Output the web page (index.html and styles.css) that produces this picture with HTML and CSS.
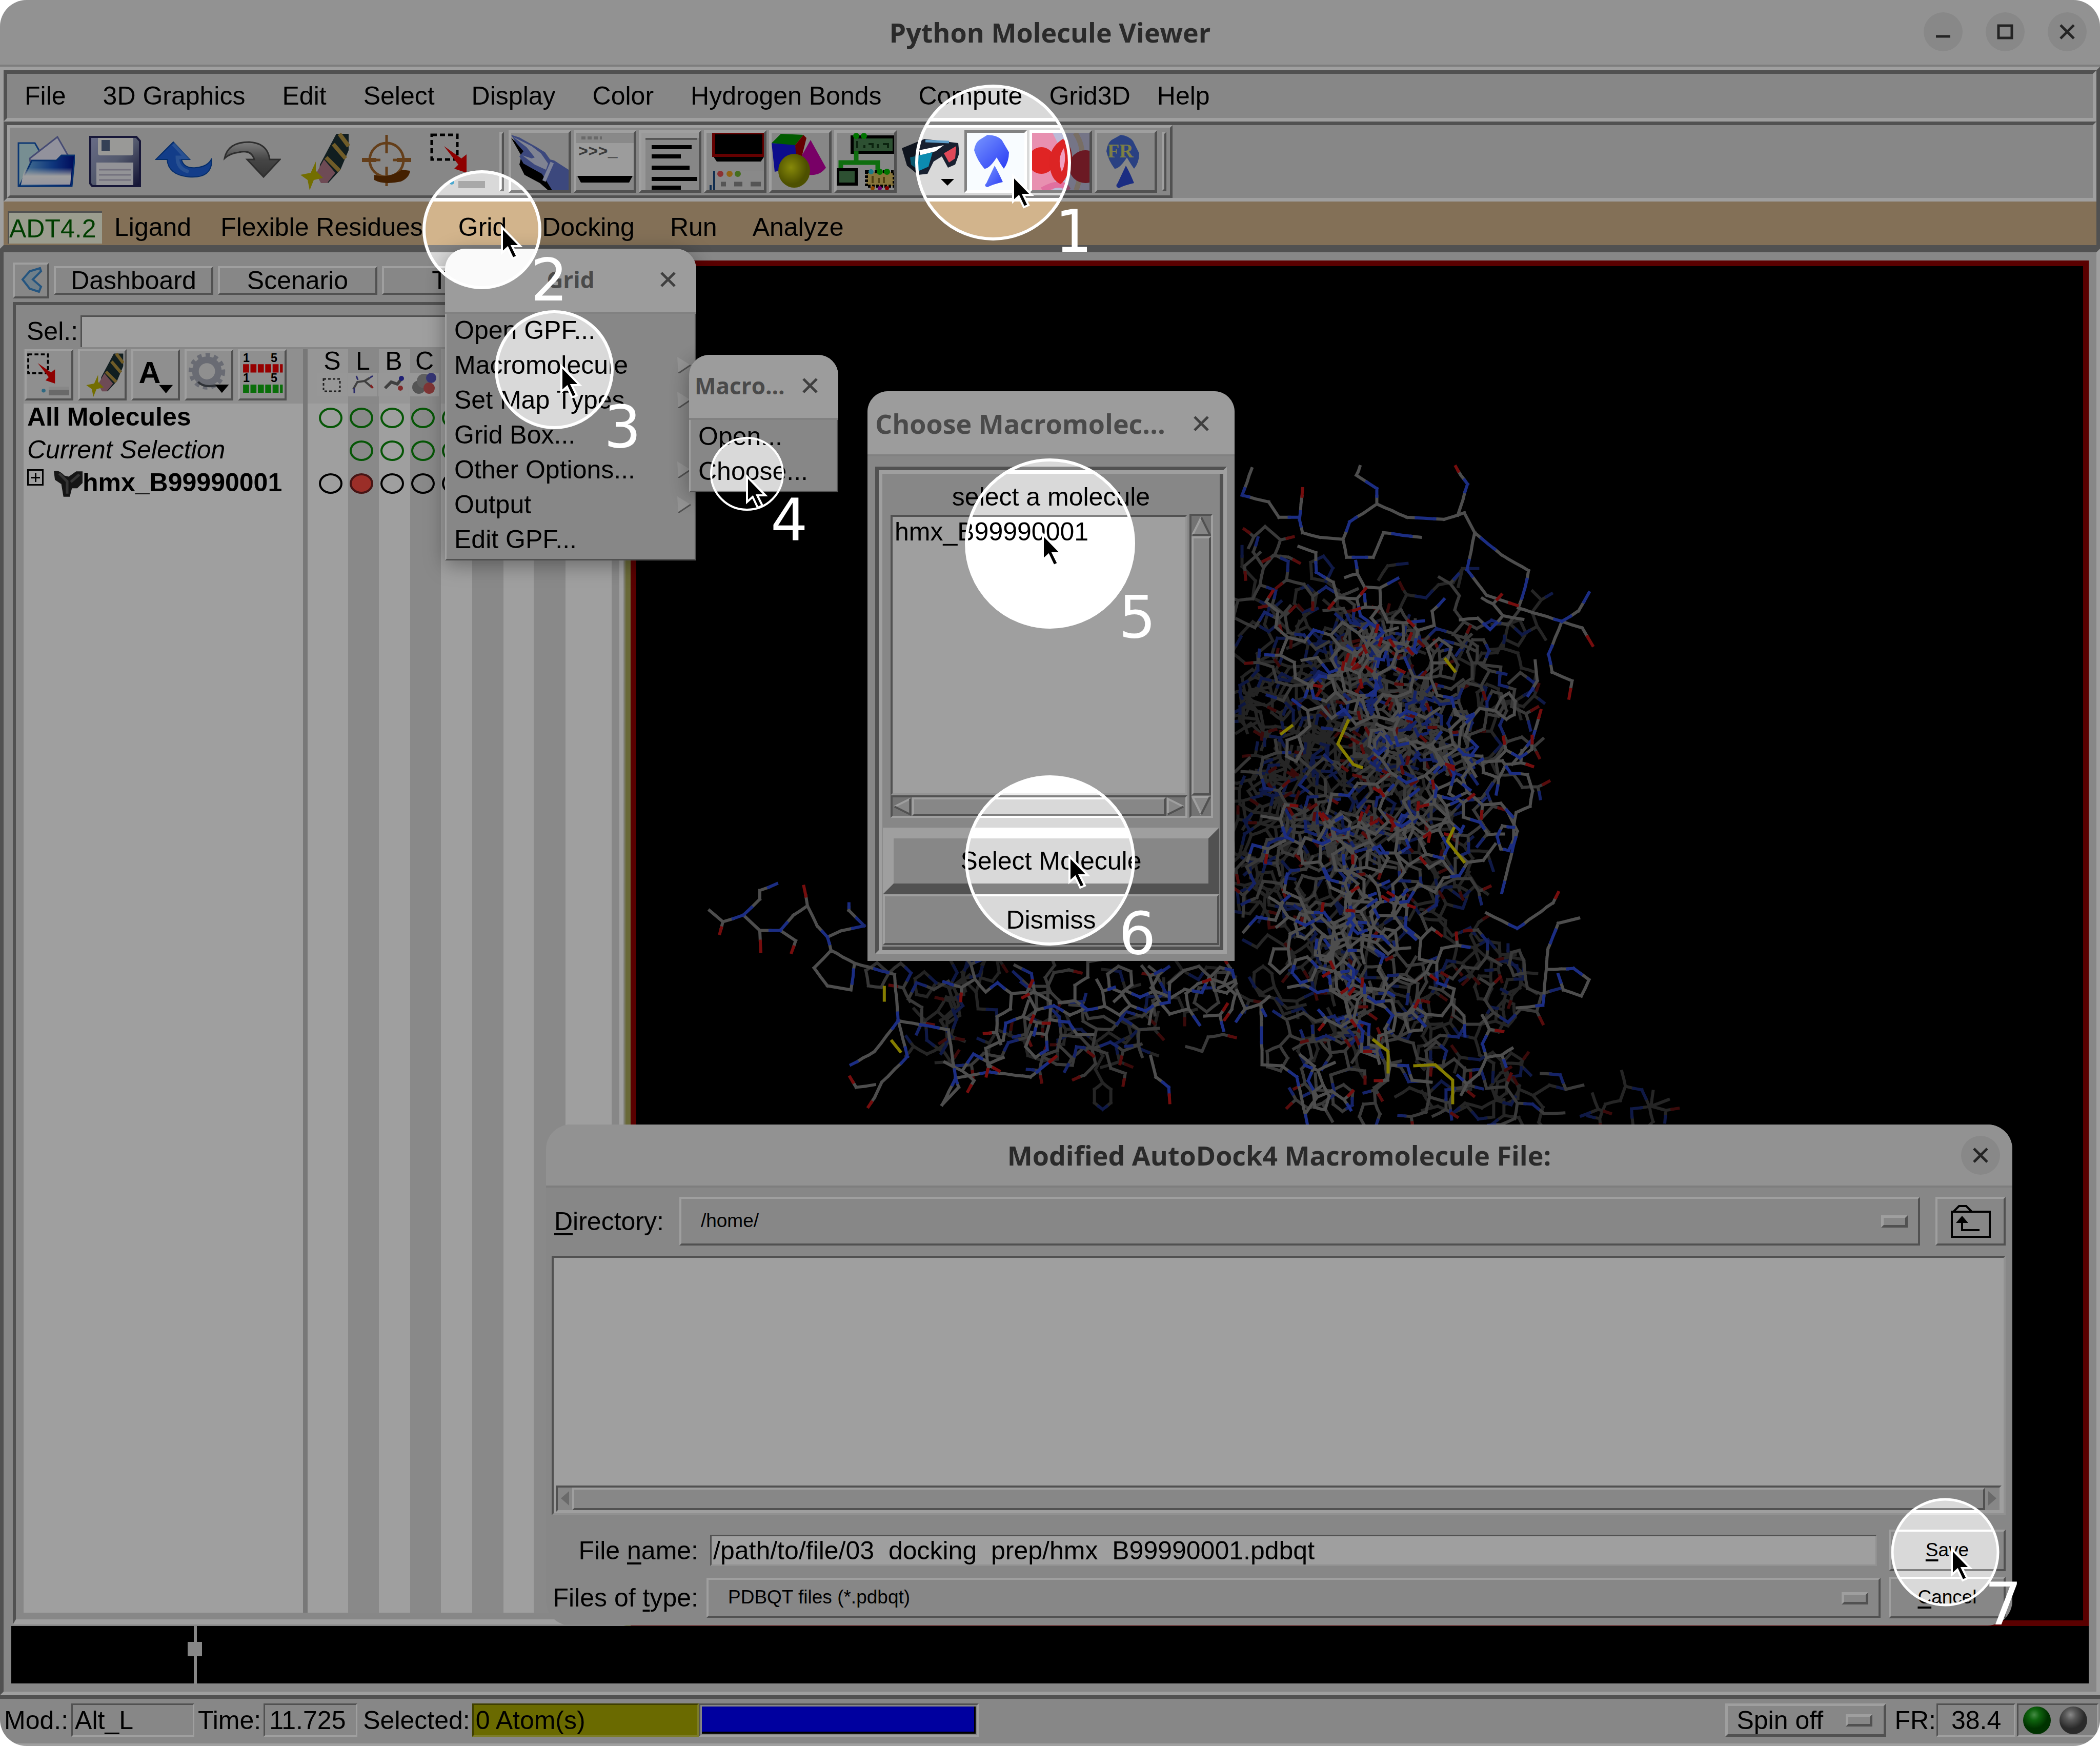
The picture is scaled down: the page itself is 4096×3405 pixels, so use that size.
FILE: index.html
```html
<!DOCTYPE html>
<html lang="en">
<head>
<meta charset="utf-8">
<title>Python Molecule Viewer</title>
<link rel="stylesheet" href="styles.css">
</head>
<body>
<main class="window">
  <header class="titlebar main-title">
    <h1 class="title">Python Molecule Viewer</h1>
    <div class="window-controls">
      <button class="round" aria-label="Minimize"><svg viewBox="0 0 76 76"><path d="M24 47H52"/></svg></button>
      <button class="round" aria-label="Maximize"><svg viewBox="0 0 76 76"><path d="M25 26H51V50H25Z"/></svg></button>
      <button class="round" aria-label="Close"><svg viewBox="0 0 76 76"><path d="M25 25L51 51M51 25L25 51"/></svg></button>
    </div>
  </header>

  <div class="bars">
    <nav class="menubar panel" aria-label="Main menu">
      <button>File</button><button>3D Graphics</button><button>Edit</button><button>Select</button><button>Display</button><button>Color</button><button>Hydrogen Bonds</button><button>Compute</button><button class="near">Grid3D</button><button class="near">Help</button>
    </nav>
    <div class="toolbar panel">
      <div class="toolset">
        <div class="plain-tools">
          <button aria-label="Open"><svg viewBox="0 0 112 112"><defs><linearGradient id="fold" x1="0" y1="0" x2="1" y2="0"><stop offset="0" stop-color="#7cc4ee"/><stop offset=".6" stop-color="#1857c8"/><stop offset="1" stop-color="#001090"/></linearGradient><linearGradient id="foldlow" x1="0" y1="0" x2="0" y2="1"><stop offset="0" stop-color="#fff" stop-opacity="0"/><stop offset=".5" stop-color="#fff"/><stop offset="1" stop-color="#eef"/></linearGradient></defs><path d="M2 20H34L42 34V104H2Z" fill="#bfe4ea" stroke="#1458b8" stroke-width="3"/><path d="M24 50L78 8L102 50L90 90H30Z" fill="#eaeafa" stroke="#7078b8" stroke-width="3"/><path d="M28 54H76L86 44H112L106 104H4Z" fill="url(#fold)" stroke="#0a4cae" stroke-width="3"/><path d="M14 68H106L103 101H7Z" fill="url(#foldlow)"/></svg></button>
          <button aria-label="Save"><svg viewBox="0 0 112 112"><defs><linearGradient id="disk" x1="0" y1="0" x2="1" y2="1"><stop offset="0" stop-color="#a8aed8"/><stop offset=".5" stop-color="#8690b0"/><stop offset="1" stop-color="#1c1c50"/></linearGradient></defs><path d="M8 8H98L105 16V104H12L8 99Z" fill="url(#disk)" stroke="#26265a" stroke-width="4"/><path d="M23 10H92V40Q92 44 87 44H28Q23 44 23 40Z" fill="#f6f6f2"/><path d="M30 14H46V35H30Z" fill="#55688a"/><path d="M20 58H92V102H20Z" fill="#ececf2"/><path d="M25 72H87M25 82H87M25 92H87" stroke="#b8b4c8" stroke-width="3"/></svg></button>
          <button aria-label="Undo"><svg viewBox="0 0 112 112"><path d="M36 18L68 52H52Q56 70 80 68Q104 66 111 50Q113 90 66 86Q26 82 24 52H2Z" fill="#1f62dc" stroke="#0848a8" stroke-width="2"/><path d="M36 22L60 48H44Q44 70 66 76" fill="none" stroke="#5a9af4" stroke-width="7" opacity=".6"/></svg></button>
          <button aria-label="Redo"><svg viewBox="0 0 112 112"><defs><linearGradient id="redo" x1="0" y1="0" x2="0" y2="1"><stop offset="0" stop-color="#c8c8c8"/><stop offset=".5" stop-color="#707070"/><stop offset="1" stop-color="#565656"/></linearGradient></defs><path d="M2 50Q8 18 50 18Q86 20 90 52H110L78 86L46 52H60Q54 32 30 38Q12 40 2 50Z" fill="url(#redo)" stroke="#4a4a4a" stroke-width="3"/></svg></button>
          <button aria-label="Erase"><svg viewBox="0 0 112 112"><use href="#eraser"/></svg></button>
          <button aria-label="Center"><svg viewBox="0 0 112 112"><g fill="none" stroke="#a06428" stroke-width="5"><circle cx="50" cy="53" r="33"/><path d="M50 4V40M50 66V104M2 53H38M62 53H98" /></g><path d="M2 53H30M70 53H98" stroke="#a06428" stroke-width="8"/><path d="M26 82Q52 90 80 72L96 74Q94 88 78 95Q44 102 26 92Z" fill="#6e3400"/></svg></button>
          <button aria-label="Select region"><svg viewBox="0 0 112 112"><use href="#picker"/></svg></button>
        </div>
        <span class="grip"></span>
        <div class="tools">
          <button aria-label="Pick"><svg viewBox="0 0 112 112"><path d="M0 10L20 45L16 62L26 82L56 98L72 112H100L60 60Z" fill="#000"/><path d="M0 4L16 9L50 28L66 38L76 52L84 54L112 72V112H80L60 80L42 70L24 60L16 46L24 36L10 20Z" fill="#6074c8"/><path d="M4 8L40 26L58 40L72 60L68 72L46 62L22 44L40 50L46 48L30 28Z" fill="#ccd2ea"/><path d="M80 58L64 94" stroke="#c8d0f4" stroke-width="7"/></svg></button>
          <button aria-label="Python shell"><svg viewBox="0 0 112 112"><path d="M2 84H110L103 97H9Z"/><path d="M0 2H112V84H0Z" fill="#fafafa"/><path d="M0 2H112V20H0Z" fill="#dcdcdc"/><path d="M10 10H50" stroke="#a8a8a8" stroke-width="6" stroke-dasharray="8 4"/><text x="4" y="46" class="prompt">&gt;&gt;&gt;_</text></svg></button>
          <button aria-label="Log"><svg viewBox="0 0 112 112"><path d="M0 0H112V10H8V112H0Z" fill="#f5f5f5"/><path d="M8 12H108" stroke="#777" stroke-width="3"/><path d="M20 28H98M20 46H77M20 68H94M20 90H109M20 107H77" stroke="#000" stroke-width="8"/></svg></button>
          <button aria-label="Camera window"><svg viewBox="0 0 112 112"><path d="M14 0H112V44H14Z" stroke="#a00000" stroke-width="6"/><path d="M14 47H112L106 56H20Z"/><path d="M14 74H112V112H14Z" fill="#dcdcdc"/><path d="M15 74V112M8 102V112" stroke="#1c4a80" stroke-width="4"/><circle cx="27" cy="80" r="6" fill="#e05050"/><circle cx="45" cy="80" r="6" fill="#e8a020"/><circle cx="61" cy="80" r="6" fill="#70b030"/><path d="M28 100H38M54 100H70M86 100H106" stroke="#888" stroke-width="9"/></svg></button>
          <button aria-label="Geometries"><svg viewBox="0 0 112 112"><defs><radialGradient id="ball" cx=".4" cy=".4"><stop offset="0" stop-color="#d8dc10"/><stop offset="1" stop-color="#7c8000"/></radialGradient></defs><path d="M0 20L46 22L52 66L6 76Z" fill="#1414e0"/><path d="M18 2L62 4L46 24L0 20Z" fill="#009000"/><path d="M62 4L68 10L58 50L48 48L46 24Z" fill="#a00000"/><path d="M76 14L106 68Q94 84 74 82L58 46Z" fill="#c000a4"/><ellipse cx="44" cy="74" rx="31" ry="33" fill="url(#ball)"/></svg></button>
          <button aria-label="Vision network"><svg viewBox="0 0 112 112"><path d="M30 8H112V38H30Z" fill="#488050" stroke="#000" stroke-width="6"/><path d="M40 16V30M54 24V30M62 22H70V30M80 22V30M90 22H100V30" stroke="#123818" stroke-width="4" fill="none"/><path d="M38 36V56M8 72V58H80V72" stroke="#18b018" stroke-width="9" fill="none"/><path d="M2 72H38V100H2Z" fill="#488050" stroke="#000" stroke-width="6"/><path d="M58 76H112V104H58Z" fill="#d8bc60" stroke="#000" stroke-width="6" stroke-dasharray="5 3"/><path d="M70 84V98M82 88V98M92 86V98" stroke="#806820" stroke-width="4"/><circle cx="38" cy="6" r="6" fill="#0b0"/><circle cx="53" cy="6" r="6" fill="#0b0"/><circle cx="67" cy="76" r="5" fill="#2cc4dc"/><circle cx="84" cy="76" r="6" fill="#0b0"/><circle cx="98" cy="76" r="6" fill="#0b0"/><circle cx="70" cy="108" r="4" fill="#e07000"/><circle cx="84" cy="108" r="4" fill="#b000b0"/><circle cx="98" cy="108" r="4" fill="#d00000"/></svg></button>
          <button class="flat" aria-label="Stereo view"><svg viewBox="0 0 112 112"><path d="M0 30L44 12L110 20L112 40L104 62L90 68L78 46L62 56L50 80L32 82L10 64Z" fill="#182030"/><path d="M34 34L82 24L66 36L36 44Z" fill="#fff"/><path d="M16 48L60 38L52 66L34 74L18 62Z" fill="#0c8cb0"/><path d="M82 40L106 26L104 50L92 58Z" fill="#e04858"/><path d="M46 16L92 18" stroke="#5c9cc8" stroke-width="5"/><path d="M76 90H102L89 103Z"/></svg></button>
          <button class="active" aria-label="AutoDock Tools"><svg viewBox="0 0 112 112"><defs><linearGradient id="blob" x1="0" y1="0" x2="1" y2="1"><stop offset="0" stop-color="#7896ff"/><stop offset="1" stop-color="#2a3cf4"/></linearGradient></defs><path d="M40 4Q58 4 68 14L82 38Q82 56 72 70Q66 62 58 48Q44 70 34 70Q20 54 14 34Q16 20 24 14Z" fill="url(#blob)"/><path d="M54 64Q62 78 70 96Q52 100 40 106Q32 104 38 98Z" fill="url(#blob)"/></svg></button>
          <button aria-label="Docking pair"><svg viewBox="0 0 112 112"><path d="M0 0H112V112H0Z" fill="#bcbcd8"/><path d="M0 0H40L60 40L40 112H0Z" fill="#e890b0"/><path d="M84 0Q112 40 86 112" fill="none" stroke="#c0b0a0" stroke-width="10"/><path d="M20 112Q60 90 70 112" fill="none" stroke="#e070a0" stroke-width="12"/><circle cx="18" cy="54" r="26" fill="#e02424"/><circle cx="104" cy="66" r="32" fill="#ac2838"/><path d="M60 12Q32 30 34 60Q36 92 56 100Q74 84 78 46Q76 20 60 12Z" fill="#dc2424"/><path d="M62 30Q48 50 58 76Q68 56 62 30Z" fill="#f0a0c0"/></svg></button>
          <button aria-label="AutoDock FR"><svg viewBox="0 0 112 112"><path d="M46 4Q62 6 70 16L82 40Q82 58 72 70Q66 62 58 48Q44 70 34 70Q22 54 18 36Q20 20 28 14Z" fill="#4468d0"/><path d="M56 64Q64 78 72 98Q54 102 42 108Q34 104 40 98Z" fill="#2c48d0"/><text x="20" y="48" class="fr">FR</text></svg></button>
        </div>
        <span class="grip"></span>
      </div>
    </div>
    <nav class="adtbar" aria-label="AutoDock Tools menu">
      <span class="adt">ADT4.2</span><button class="ligand">Ligand</button><button>Flexible Residues</button><button>Grid</button><button>Docking</button><button>Run</button><button>Analyze</button>
    </nav>
  </div>

  <section class="work">
    <div class="workspace">
      <aside class="side">
        <div class="tabs">
          <button class="back" aria-label="Collapse"><svg viewBox="-6 0 60 60"><path d="M42 6L22 12L8 28L22 46L40 52L44 42L28 28L44 12Z" fill="#b4ccdc" stroke="#3c88cc" stroke-width="4"/></svg></button>
          <button class="tab">Dashboard</button><button class="tab">Scenario</button><button class="tab">Tools</button>
        </div>
        <div class="dash">
          <div class="sel"><label for="sel">Sel.:</label><input id="sel" type="text"></div>
          <div class="board">
            <div class="tree">
              <div class="tree-tools">
                <button aria-label="Select"><svg viewBox="0 0 112 112"><use href="#picker"/></svg></button>
                <button aria-label="Clear"><svg viewBox="0 0 112 112"><use href="#eraser"/></svg></button>
                <button aria-label="Labels"><svg viewBox="0 0 84 100"><text x="6" y="68" class="letter-a">A</text><path d="M50 72H80L65 90Z"/></svg></button>
                <button aria-label="Settings"><svg viewBox="0 0 100 100"><circle cx="46" cy="42" r="26" fill="none" stroke="#a8acb8" stroke-width="15"/><circle cx="46" cy="42" r="37" fill="none" stroke="#a8acb8" stroke-width="9" stroke-dasharray="10 9"/><path d="M26 66Q40 80 66 74" stroke="#4c5058" stroke-width="5" fill="none"/><path d="M64 72H96L80 91Z"/></svg></button>
                <button aria-label="Sequence"><svg viewBox="0 0 90 100"><text x="4" y="22" class="seq">1</text><text x="64" y="22" class="seq">5</text><path d="M4 36H90" stroke="#f00000" stroke-width="18" stroke-dasharray="13 3"/><text x="4" y="66" class="seq">1</text><text x="64" y="66" class="seq">5</text><path d="M4 80H90" stroke="#10b010" stroke-width="18" stroke-dasharray="13 3"/></svg></button>
              </div>
              <ul class="molecules">
                <li class="all">All Molecules</li>
                <li class="current">Current Selection</li>
                <li class="mol"><span class="plus"></span><svg class="clamp" viewBox="0 0 56 56"><path d="M2 4Q10 0 22 12L30 14L44 4H56V26L46 36H36L32 52H20L16 28L4 20Z" fill="#222"/><path d="M12 8L28 24M50 10L34 24M27 22V46" stroke="#555" stroke-width="5"/></svg>hmx_B99990001</li>
              </ul>
            </div>
            <div class="display">
              <div class="heads">
                <span>S<svg viewBox="0 0 56 46"><path d="M12 12H44V36H12Z" fill="none" stroke="#333" stroke-width="3" stroke-dasharray="5 4"/></svg></span>
                <span>L<svg viewBox="0 0 56 46"><path d="M10 32L18 18L32 16L42 10M32 16L46 28" stroke="#666" stroke-width="4" fill="none"/><path d="M16 6L19 14M42 10L48 6M12 30V40" stroke="#44a" stroke-width="3"/><path d="M44 24L48 30" stroke="#c33" stroke-width="4"/></svg></span>
                <span>B<svg viewBox="0 0 56 46"><path d="M12 30L24 18L36 22L44 12" stroke="#666" stroke-width="6" fill="none"/><circle cx="44" cy="11" r="5" fill="#33b"/><circle cx="42" cy="30" r="5" fill="#c44"/></svg></span>
                <span>C<svg viewBox="0 0 56 46"><circle cx="18" cy="28" r="13" fill="#888"/><circle cx="28" cy="16" r="14" fill="#999"/><circle cx="42" cy="10" r="10" fill="#55b"/><circle cx="38" cy="30" r="11" fill="#c55"/></svg></span>
              </div>
              <div class="dots">
                <input type="checkbox" aria-label="All S"><input type="checkbox" aria-label="All L"><input type="checkbox" aria-label="All B"><input type="checkbox" aria-label="All C"><input type="checkbox" aria-label="All R">
                <i></i><input type="checkbox" aria-label="Selection L"><input type="checkbox" aria-label="Selection B"><input type="checkbox" aria-label="Selection C"><input type="checkbox" aria-label="Selection R">
                <input class="k" type="checkbox" aria-label="hmx S"><input class="k" type="checkbox" checked aria-label="hmx L"><input class="k" type="checkbox" aria-label="hmx B"><input class="k" type="checkbox" aria-label="hmx C"><input class="k" type="checkbox" aria-label="hmx R">
              </div>
            </div>
          </div>
        </div>
      </aside>
      <div class="sash"></div>
      <div class="viewer"><svg id="molecule" viewBox="1241 518 2825 2642" preserveAspectRatio="xMinYMin slice"></svg></div>
    </div>
    <div class="timeline"><span class="slider"></span></div>
  </section>

  <footer class="status">
    <span>Mod.:</span><output class="field mod">Alt_L</output>
    <span>Time:</span><output class="field time">11.725</output>
    <span class="selected">Selected:</span><output class="field atoms">0 Atom(s)</output>
    <div class="field progress"><div></div></div>
    <div class="right">
      <button class="spin">Spin off<i class="knob"></i></button>
      <span>FR:</span><output class="field rate">38.4</output>
      <div class="field leds"><svg viewBox="0 0 152 58"><defs><radialGradient id="lg" cx=".4" cy=".3"><stop offset="0" stop-color="#70e070"/><stop offset=".4" stop-color="#18a018"/><stop offset="1" stop-color="#005000"/></radialGradient><radialGradient id="lk" cx=".4" cy=".3"><stop offset="0" stop-color="#ddd"/><stop offset=".4" stop-color="#909090"/><stop offset="1" stop-color="#444"/></radialGradient></defs><circle cx="36" cy="30" r="27" fill="url(#lg)"/><circle cx="107" cy="30" r="27" fill="url(#lk)"/></svg></div>
    </div>
  </footer>

  <section class="popup grid-menu">
    <header class="titlebar faded"><h2 class="title">Grid</h2><button class="x" aria-label="Close"><svg viewBox="0 0 40 40"><path d="M7 7L33 33M33 7L7 33"/></svg></button></header>
    <div class="items">
      <button>Open GPF...</button>
      <button>Macromolecule<svg class="arrow" viewBox="0 0 30 32"><use href="#sub"/></svg></button>
      <button>Set Map Types<svg class="arrow" viewBox="0 0 30 32"><use href="#sub"/></svg></button>
      <button>Grid Box...</button>
      <button>Other Options...<svg class="arrow" viewBox="0 0 30 32"><use href="#sub"/></svg></button>
      <button>Output<svg class="arrow" viewBox="0 0 30 32"><use href="#sub"/></svg></button>
      <button>Edit GPF...</button>
    </div>
  </section>

  <section class="popup macro-menu">
    <header class="titlebar faded"><h2 class="title">Macro...</h2><button class="x" aria-label="Close"><svg viewBox="0 0 40 40"><path d="M7 7L33 33M33 7L7 33"/></svg></button></header>
    <div class="items"><button>Open...</button><button>Choose...</button></div>
  </section>

  <section class="popup choose">
    <header class="titlebar faded"><h2 class="title">Choose Macromolec...</h2><button class="x" aria-label="Close"><svg viewBox="0 0 40 40"><path d="M7 7L33 33M33 7L7 33"/></svg></button></header>
    <div class="choose-body">
      <label for="mols">select a molecule</label>
      <div class="scroller">
        <select id="mols" size="8"><option>hmx_B99990001</option></select>
        <div class="vbar">
          <button aria-label="Up"><svg viewBox="0 0 38 40"><path d="M19 3L36 37H2Z" fill="#d9d9d9"/><path d="M19 3L2 37" stroke="#fff" stroke-width="4"/><path d="M2 37H36L19 3" stroke="#828282" stroke-width="4" fill="none"/></svg></button>
          <span class="thumb"></span>
          <button aria-label="Down"><svg viewBox="0 0 38 40"><path d="M2 3H36L19 37Z" fill="#d9d9d9"/><path d="M36 3H2L19 37" stroke="#fff" stroke-width="4" fill="none"/><path d="M19 37L36 3" stroke="#828282" stroke-width="4"/></svg></button>
        </div>
        <div class="hbar">
          <button aria-label="Left"><svg viewBox="0 0 38 38"><path d="M3 19L35 3V35Z" fill="#d9d9d9"/><path d="M35 3L3 19" stroke="#fff" stroke-width="4"/><path d="M3 19L35 35V3" stroke="#828282" stroke-width="4" fill="none"/></svg></button>
          <span class="thumb"></span>
          <button aria-label="Right"><svg viewBox="0 0 38 38"><path d="M3 3L35 19L3 35Z" fill="#d9d9d9"/><path d="M3 35V3L35 19" stroke="#fff" stroke-width="4" fill="none"/><path d="M35 19L3 35" stroke="#828282" stroke-width="4"/></svg></button>
        </div>
      </div>
      <button class="default">Select Molecule</button>
      <button class="dismiss">Dismiss</button>
    </div>
  </section>

  <section class="popup file">
    <header class="titlebar"><h2 class="title">Modified AutoDock4 Macromolecule File:</h2><button class="round" aria-label="Close"><svg viewBox="0 0 76 76"><path d="M25 25L51 51M51 25L25 51"/></svg></button></header>
    <div class="file-body">
      <div class="dir">
        <label for="dir"><u>D</u>irectory:</label>
        <div class="combo"><select id="dir"><option>/home/</option></select><i class="knob"></i></div>
        <button class="up" aria-label="Parent directory"><svg viewBox="0 0 84 70"><path d="M6 16H80V65H6ZM10 15L20 5H34L44 15M26 32V52H60" fill="none" stroke="#000" stroke-width="4"/><path d="M14 38L26 24L38 38Z"/></svg></button>
      </div>
      <div class="listing">
        <div class="hbar">
          <button aria-label="Scroll left"><svg viewBox="0 0 28 38"><path d="M22 4V32L6 18Z" fill="#aaa"/></svg></button>
          <span class="thumb"></span>
          <button aria-label="Scroll right"><svg viewBox="0 0 28 38"><path d="M6 4V32L22 18Z" fill="#aaa"/></svg></button>
        </div>
      </div>
      <form class="fields" onsubmit="return false">
        <label for="fname">File <u>n</u>ame:</label>
        <input id="fname" type="text" value="/path/to/file/03  docking  prep/hmx  B99990001.pdbqt">
        <button><u>S</u>ave</button>
        <label for="ftype">Files of <u>t</u>ype:</label>
        <div class="combo"><select id="ftype"><option>PDBQT files (*.pdbqt)</option></select><i class="knob"></i></div>
        <button><u>C</u>ancel</button>
      </form>
    </div>
  </section>

  <svg class="tour" viewBox="0 0 4096 3405" preserveAspectRatio="xMinYMin meet">
    <defs>
      <mask id="lit">
        <rect width="4096" height="3405" fill="#fff"/>
        <circle cx="1937" cy="317" r="149"/><circle cx="940" cy="448" r="113"/><circle cx="1081" cy="721" r="113"/>
        <circle cx="1457" cy="924" r="70"/><circle cx="2048" cy="1060" r="163"/><circle cx="2048" cy="1678" r="163"/><circle cx="3794" cy="3027" r="103"/>
      </mask>
      <path id="pointer" d="M0 0V50L11 40L21 61L30 57L20 37H36Z"/>
      <g id="sub"><path d="M2 0L28 16L4 32Z" fill="#ededed"/><path d="M28 16L4 32" stroke="#828282" stroke-width="3"/></g>
      <g id="eraser"><path d="M86 2H110V34L94 72L70 98L52 86L54 62Z" fill="#1c3034"/><path d="M80 22L104 50M92 2L110 26M66 48L92 74" stroke="#b49440" stroke-width="8"/><path d="M62 52L84 78L68 98H56L46 80Z" fill="#b07888"/><path d="M46 56L46 74L60 88L42 92L34 112L30 92L16 82L36 78Z" fill="#b8b000"/></g>
      <g id="picker"><path d="M4 4H54V52H4Z" fill="none" stroke="#000" stroke-width="5" stroke-dasharray="10 6"/><path d="M28 26L62 50L72 42V78L48 70L56 62Z" fill="#e40000"/><path d="M56 86H108V108H56Z" fill="#a8a8a8"/><path d="M56 86H108V94H56Z" fill="#d8d8d8"/><circle cx="43" cy="96" r="5" fill="#4aa8d0"/></g>
    </defs>
    <rect width="4096" height="3405" fill="#000" fill-opacity=".375" mask="url(#lit)"/>
    <g fill="none" stroke="#fff" stroke-width="6">
      <circle cx="1937" cy="317" r="149"/><circle cx="940" cy="448" r="113"/><circle cx="1081" cy="721" r="113"/>
      <circle cx="1457" cy="924" r="70" stroke-width="4"/><circle cx="2048" cy="1060" r="163"/><circle cx="2048" cy="1678" r="163"/><circle cx="3794" cy="3027" r="103" stroke-width="5"/>
    </g>
    <g fill="#000" stroke="#fff" stroke-width="4">
      <use href="#pointer" x="1976" y="343"/><use href="#pointer" x="979" y="443"/><use href="#pointer" x="1095" y="714"/><use href="#pointer" x="1457" y="929"/><use href="#pointer" x="2034" y="1042"/><use href="#pointer" x="2086" y="1670"/><use href="#pointer" x="3807" y="3021"/>
    </g>
    <g class="steps">
      <text x="2058" y="491">1</text><text x="1035" y="586">2</text><text x="1178" y="872">3</text><text x="1503" y="1054">4</text><text x="2182" y="1243">5</text><text x="2182" y="1860">6</text><text x="3871" y="3168">7</text>
    </g>
  </svg>
</main>
<script src="molecule.js"></script>
</body>
</html>
```
FILE: styles.css
```css
:root {
  --face: #d9d9d9;
  --light: #fff;
  --dark: #828282;
}
* { box-sizing: border-box; }
body {
  margin: 0;
  background: #fff;
  font: 50px/1.2 "Liberation Sans", Arial, sans-serif;
  color: #000;
}
button, input, select {
  appearance: none;
  margin: 0;
  padding: 0;
  border: 0;
  border-radius: 0;
  background: none;
  font: inherit;
  color: inherit;
  white-space: nowrap;
}
svg { display: block; }
h1, h2, ul { margin: 0; padding: 0; list-style: none; }

.window {
  position: relative;
  display: flex;
  flex-direction: column;
  min-height: 100vh;
  border-radius: 52px;
  overflow: hidden;
  background: var(--face);
}

/* title bars */
.titlebar {
  display: flex;
  align-items: center;
  height: 127px;
  background: #ebebeb;
  border-bottom: 4px solid #c8c8c8;
  color: #444;
}
.title {
  flex: 1;
  text-align: center;
  white-space: nowrap;
  font: bold 52px/60px "Open Sans", "Noto Sans", sans-serif;
}
.main-title { height: 130px; position: relative; }
.window-controls { position: absolute; right: 26px; top: 24px; display: flex; gap: 45px; }
.round { width: 76px; height: 76px; border-radius: 50%; background: #dadada; }
.round svg { width: 76px; height: 76px; fill: none; stroke: #3a3a3a; stroke-width: 5; }
.x svg { width: 40px; height: 40px; fill: none; stroke: #666; stroke-width: 5; }
.faded { background: #fafafa; color: #777; border-bottom-color: #cfcfcf; }

/* menu bar, tool bar, ADT bar */
.bars { border: 7px solid; border-color: var(--light) var(--dark) var(--dark) var(--light); }
.panel { border: 7px solid; border-color: var(--dark) var(--light) var(--light) var(--dark); }
.menubar { display: flex; align-items: center; gap: 72px; height: 100px; padding-left: 34px; }
.menubar .near { margin-left: -20px; }
.toolbar { height: 156px; display: flex; }
.toolset { display: flex; align-items: center; gap: 9px; border: 5px solid; border-color: var(--light) var(--dark) var(--dark) var(--light); padding: 0 7px 0 4px; }
.plain-tools { display: flex; width: 942px; }
.plain-tools button { width: 134px; padding: 0 11px; }
.plain-tools svg { width: 112px; height: 112px; }
.grip { width: 9px; height: 116px; border: 4px solid; border-color: var(--light) var(--dark) var(--dark) var(--light); }
.tools { display: flex; gap: 5px; }
.tools button { width: 122px; height: 122px; border: 5px solid; border-color: var(--light) var(--dark) var(--dark) var(--light); }
.tools svg { width: 112px; height: 112px; }
.tools .flat { border-color: transparent; }
.tools .active { background: #f8fcff; border-color: var(--dark) var(--light) var(--light) var(--dark); }
.prompt { font: bold 32px "Liberation Mono", monospace; fill: #606060; }
.fr { font: bold 38px "Liberation Serif", serif; fill: #c8cc70; }
.adtbar { display: flex; align-items: center; gap: 69px; height: 85px; padding: 15px 0 0 8px; background: #d2b48c; }
.adt { width: 184px; margin-right: -45px; height: 64px; line-height: 62px; background: #f8fce6; border-top: 4px solid var(--dark); border-left: 3px solid var(--dark); color: #006400; }
.ligand { margin-right: -12px; }

/* work area */
.work { flex: 1; display: flex; flex-direction: column; border: 7px solid; border-color: var(--dark) var(--light) var(--light) var(--dark); padding: 16px 15px; }
.workspace { flex: 1; display: flex; }
.side { width: 1194px; display: flex; flex-direction: column; padding: 4px 0 3px 3px; }
.tabs { display: flex; gap: 9px; align-items: center; height: 70px; }
.back { width: 71px; height: 70px; padding: 1px; border: 4px solid; border-color: var(--light) var(--dark) var(--dark) var(--light); }
.back svg { width: 60px; height: 60px; }
.tab { width: 311px; height: 56px; line-height: 48px; border: 4px solid; border-color: var(--light) var(--dark) var(--dark) var(--light); }
.dash { flex: 1; display: flex; flex-direction: column; margin-top: 7px; padding: 20px 15px 13px; border: 6px solid; border-color: var(--dark) var(--light) var(--light) var(--dark); border-width: 6px 8px 10px 6px; }
.sel { display: flex; align-items: center; gap: 5px; padding-left: 6px; height: 62px; margin-bottom: 4px; }
.sel input { flex: 1; height: 62px; background: #fff; border-left: 3px solid var(--dark); border-top: 3px solid var(--dark); }
.board { flex: 1; display: flex; }
.tree { width: 554px; background: #fff; border-right: 9px solid #c0c0c0; }
.tree-tools { display: flex; gap: 9px; height: 106px; padding-left: 2px; background: #e6e6e6; }
.tree-tools button { height: 100px; width: 95px; border: 4px solid; border-color: var(--light) var(--dark) var(--dark) var(--light); }
.tree-tools svg { width: 86px; height: 90px; }
.letter-a { font: bold 66px "Liberation Sans", Arial, sans-serif; }
.seq { font: bold 26px "Liberation Sans", Arial, sans-serif; }
.molecules { padding: 0 0 0 7px; }
.molecules li { height: 64px; line-height: 52px; white-space: nowrap; }
.all, .mol { font-weight: bold; }
.current { font-style: italic; }
.mol { display: flex; }
.plus { width: 32px; height: 32px; border: 3px solid #000; background: linear-gradient(#000, #000) center / 18px 3px no-repeat, linear-gradient(#000, #000) center / 3px 18px no-repeat; }
.clamp { width: 58px; height: 58px; margin-left: 18px; }
.display { flex: 1; background: linear-gradient(90deg, #fff 79px, #dcdcdc 79px 139px, #fff 139px 200px, #dcdcdc 200px 260px, #fff 260px 321px, #dcdcdc 321px 382px, #fff 382px 441px, #dcdcdc 441px 503px, #fff 503px); }
.heads { display: flex; height: 106px; padding-left: 18px; background: rgba(217, 217, 217, .4); }
.heads span { width: 60px; text-align: center; line-height: 46px; }
.heads svg { width: 58px; height: 46px; background: #f2f2f2; }
.dots { display: grid; grid-template-columns: repeat(5, 60px); grid-auto-rows: 64px; justify-items: center; padding: 8px 0 0 15px; }
.dots input { width: 46px; height: 40px; border: 4px solid #0a8a0a; border-radius: 50%; }
.dots .k { border-color: #000; }
.dots .k:checked { background: #f84a40; border-color: #702020; }
.sash { width: 14px; background: linear-gradient(90deg, #d9d9d9, #a8a858 40%, #a8a858); }
.viewer { flex: 1; position: relative; border: 11px solid #900000; background: #000; }
.viewer svg { position: absolute; inset: 0; width: 100%; height: 100%; fill: none; stroke-width: 6; stroke-linecap: square; }
.timeline { height: 112px; background: #000; padding-left: 344px; }
.slider { display: block; width: 28px; height: 112px; background: linear-gradient(#d9d9d9, #d9d9d9) 0 31px / 28px 28px no-repeat, linear-gradient(#d9d9d9, #d9d9d9) 12px 0 / 6px 112px no-repeat; }

/* status bar */
.status { display: flex; align-items: flex-start; height: 99px; padding: 9px 3px 0 8px; border-top: 7px solid var(--dark); border-bottom: 5px solid var(--light); line-height: 66px; white-space: nowrap; }
.field { height: 65px; line-height: 60px; padding-left: 4px; border: 3px solid; border-color: var(--dark) var(--light) var(--light) var(--dark); }
.mod { width: 240px; margin: 0 7px 0 6px; }
.time { width: 183px; margin: 0 11px 0 5px; padding-left: 8px; }
.atoms { width: 442px; margin-left: 4px; background: #abab00; border-color: #666600 #c8c840 #c8c840 #666600; }
.progress { width: 546px; padding: 3px; }
.progress div { height: 53px; background: #00f; border-right: 3px solid #000; border-bottom: 4px solid #000; }
.right { margin-left: auto; display: flex; }
.spin { display: flex; align-items: center; justify-content: space-between; width: 314px; height: 65px; margin-right: 16px; padding: 0 22px 0 17px; border: 5px solid; border-color: var(--light) var(--dark) var(--dark) var(--light); }
.knob { width: 52px; height: 24px; border: 5px solid; border-color: var(--light) var(--dark) var(--dark) var(--light); }
.rate { width: 154px; padding-left: 26px; margin: 0 3px 0 1px; }
.leds { width: 159px; padding: 0; background: #ccc; }
.leds svg { width: 152px; height: 58px; }

/* floating windows */
.popup { position: absolute; background: var(--face); border-radius: 40px 40px 0 0; box-shadow: 0 8px 40px rgba(0, 0, 0, .35); }
.popup .titlebar { border-radius: 40px 40px 0 0; }
.items { display: flex; flex-direction: column; padding-bottom: 2px; border: 3px solid; border-color: var(--light) var(--dark) var(--dark) var(--light); border-top: 0; }
.items button { display: flex; align-items: center; justify-content: space-between; height: 68px; padding: 0 6px 4px 15px; }
.arrow { width: 30px; height: 32px; }
.grid-menu { left: 868px; top: 485px; width: 490px; }
.grid-menu .titlebar { padding: 0 35px 4px 75px; }
.grid-menu .title, .macro-menu .title { font-size: 44px; }
.macro-menu { left: 1344px; top: 692px; width: 291px; }
.macro-menu .titlebar { padding: 0 35px 4px 11px; }
.macro-menu .title { text-align: left; }
.choose { left: 1692px; top: 763px; width: 716px; padding-bottom: 1px; }
.choose .titlebar { padding: 3px 45px 0 15px; }
.choose .title { text-align: left; }
.choose-body { display: flex; flex-direction: column; margin: 20px 15px 13px; padding: 7px 8px 10px; border: 7px solid; border-color: var(--dark) var(--light) var(--light) var(--dark); box-shadow: inset 7px 7px 0 var(--light), inset -7px -7px 0 var(--dark); }
.choose-body label { height: 78px; line-height: 90px; text-align: center; }
.scroller { display: grid; grid-template-columns: 1fr 46px; grid-template-rows: 549px 44px; column-gap: 4px; margin: 0 12px 19px 15px; }
.scroller select { width: 100%; height: 547px; margin-top: 2px; overflow: hidden; background: #fff; border: 4px solid; border-color: var(--dark) #eee #eee var(--dark); }
.scroller option { padding: 0 4px; min-height: 52px; line-height: 52px; }
.vbar, .hbar { display: flex; background: #b8b8b8; border: 4px solid; border-color: var(--dark) var(--light) var(--light) var(--dark); }
.vbar { flex-direction: column; grid-row: 1 / 3; grid-column: 2; }
.vbar svg { width: 38px; height: 40px; }
.hbar svg { width: 38px; height: 36px; }
.thumb { flex: 1; background: var(--face); border: 4px solid; border-color: var(--light) var(--dark) var(--dark) var(--light); }
.choose-body > button { border: 21px solid; border-color: var(--light) var(--dark) var(--dark) var(--light); height: 130px; }
.choose-body > .dismiss { height: 99px; border-width: 4px; }

.file { left: 1065px; top: 2193px; width: 2860px; height: 977px; border-radius: 48px; box-shadow: none; }
.file .titlebar { height: 123px; padding: 0 24px 0 100px; border-bottom-color: #cacaca; border-radius: 48px 48px 0 0; }
.file-body { padding: 18px 13px 0 11px; }
.dir { display: flex; align-items: center; gap: 30px; padding-left: 5px; }
.combo { position: relative; flex: 1; height: 95px; border: 4px solid; border-color: var(--light) var(--dark) var(--dark) var(--light); font-size: 37px; }
.combo select { width: 100%; height: 100%; padding-left: 38px; }
.combo .knob { position: absolute; right: 20px; top: 32px; }
.up { width: 137px; height: 95px; padding-left: 22px; border: 4px solid; border-color: var(--light) var(--dark) var(--dark) var(--light); }
.up svg { width: 84px; height: 70px; }
.listing { display: flex; align-items: flex-end; height: 506px; margin: 20px 0 28px; padding: 0 4px 2px; background: #fff; border: 4px solid; border-color: var(--dark) #e8e8e8 #e8e8e8 var(--dark); }
.listing .hbar { flex: 1; height: 52px; background: var(--face); }
.listing .hbar svg { width: 28px; height: 38px; }
.fields { display: grid; grid-template-columns: 286px 1fr 228px; column-gap: 16px; row-gap: 11px; align-items: center; }
.fields label { text-align: right; }
.fields input { height: 61px; margin: 0 7px; padding: 0 0 0 3px; background: #fff; border: 3px solid; border-color: var(--dark) #e8e8e8 #e8e8e8 var(--dark); }
.fields .combo { height: 78px; }
.fields .combo .knob { top: 24px; }
.fields button { height: 81px; font-size: 37px; border: 4px solid; border-color: var(--light) var(--dark) var(--dark) var(--light); }
u { text-underline-offset: 6px; text-decoration-thickness: 4px; }

/* step highlights */
.tour { position: absolute; inset: 0; width: 100%; height: 100%; pointer-events: none; }
.steps text { font: 114px "DejaVu Sans", sans-serif; fill: #fff; }
```
FILE: molecule.js
```js
// Draws the line model of the protein: random peptide-like chains inside
// the folded regions plus the loops that stick out of them.
(function () {
  let seed = 4711;
  const rnd = () => ((seed = (seed * 1664525 + 1013904223) >>> 0) / 4294967296);
  const tones = {
    near: { C: "#7c7c7c", N: "#2c48d2", O: "#bc1616", S: "#d6c800" },
    mid: { C: "#5c5c5c", N: "#2238a6", O: "#8c1414", S: "#a89c00" },
    far: { C: "#3c3c3c", N: "#182870", O: "#5c1010", S: "#6c6400" }
  };
  const paths = { far: {}, mid: {}, near: {} };
  function half(depth, atom, a, b) {
    paths[depth][atom] = (paths[depth][atom] || "") +
      "M" + Math.round(a[0]) + " " + Math.round(a[1]) + "L" + Math.round(b[0]) + " " + Math.round(b[1]);
  }
  function bond(depth, a, ta, b, tb) {
    const m = [(a[0] + b[0]) / 2, (a[1] + b[1]) / 2];
    half(depth, ta, a, m);
    half(depth, tb, m, b);
  }
  const step = (p, ang, len) => [p[0] + Math.cos(ang) * len, p[1] + Math.sin(ang) * len];
  function ring(depth, p, ang) {
    const n = rnd() < 0.5 ? 6 : 5, flat = 0.5 + rnd() * 0.5;
    const r = 26, c = step(p, ang, r);
    let prev = p, pt = "C";
    for (let i = 1; i <= n; i++) {
      const t = ang + Math.PI + (i * 2 * Math.PI) / n;
      const q = i === n ? p : [c[0] + Math.cos(t) * r * flat, c[1] + Math.sin(t) * r];
      const qt = rnd() < 0.12 ? "N" : "C";
      bond(depth, prev, pt, q, qt);
      prev = q; pt = qt;
    }
  }
  function side(depth, p, ang) {
    const k = rnd();
    if (k < 0.35) { bond(depth, p, "C", step(p, ang, 26), "O"); return; }
    let a = p;
    const n = 1 + Math.floor(rnd() * 3);
    for (let i = 0; i < n; i++) {
      const b = step(a, ang + (i % 2 ? 0.5 : -0.5), 30);
      bond(depth, a, "C", b, "C");
      a = b;
    }
    if (k < 0.55) ring(depth, a, ang);
    else {
      bond(depth, a, "C", step(a, ang + 0.9, 24), k < 0.75 ? "O" : "N");
      if (k > 0.65) bond(depth, a, "C", step(a, ang - 0.9, 24), k > 0.85 ? "O" : "C");
    }
  }
  function inside(p, poly) {
    let hit = false;
    for (let i = 0, j = poly.length - 1; i < poly.length; j = i++) {
      const a = poly[i], b = poly[j];
      if ((a[1] > p[1]) !== (b[1] > p[1]) &&
          p[0] < ((b[0] - a[0]) * (p[1] - a[1])) / (b[1] - a[1]) + a[0]) hit = !hit;
    }
    return hit;
  }
  function fill(poly, chains, depth) {
    const xs = poly.map(p => p[0]), ys = poly.map(p => p[1]);
    const x0 = Math.min(...xs), x1 = Math.max(...xs), y0 = Math.min(...ys), y1 = Math.max(...ys);
    for (let c = 0; c < chains; c++) {
      let p;
      do p = [x0 + rnd() * (x1 - x0), y0 + rnd() * (y1 - y0)]; while (!inside(p, poly));
      let dir = rnd() * 6.28, t = "C";
      for (let i = 0; i < 10; i++) {
        dir += (rnd() - 0.5) * 0.9;
        const q = step(p, dir + (i % 2 ? 0.55 : -0.55), 28 + rnd() * 12);
        if (!inside(q, poly)) break;
        const qt = i % 4 === 1 ? "N" : "C";
        bond(depth, p, t, q, qt);
        if (qt === "C" && rnd() < 0.5) side(depth, q, dir + (i % 2 ? 1.5 : -1.5));
        p = q; t = qt;
      }
    }
  }
  function trace(points, tail) {
    let k = 0;
    for (let i = 1; i < points.length; i++) {
      const a = points[i - 1], b = points[i];
      const n = Math.max(1, Math.round(Math.hypot(b[0] - a[0], b[1] - a[1]) / 32));
      for (let j = 0; j < n; j++) {
        const p = [a[0] + ((b[0] - a[0]) * j) / n, a[1] + ((b[1] - a[1]) * j) / n];
        const q = [a[0] + ((b[0] - a[0]) * (j + 1)) / n, a[1] + ((b[1] - a[1]) * (j + 1)) / n];
        const last = i === points.length - 1 && j === n - 1;
        bond("near", p, k % 4 === 2 ? "N" : "C", q, last ? tail : (k + 1) % 4 === 2 ? "N" : "C");
        k++;
      }
    }
  }
  const body = [[2400, 1060], [2480, 1010], [2600, 1090], [2700, 1070], [2860, 1090], [2980, 1180], [3050, 1240], [2990, 1380], [2990, 1560], [2940, 1640], [2920, 1720], [2860, 1800], [3000, 1860], [3060, 1930], [3000, 2010], [2960, 2100], [3120, 2070], [3280, 2140], [3320, 2196], [2540, 2196], [2520, 2080], [2460, 1960], [2400, 1900]];
  const core = [[2400, 1180], [2560, 1150], [2780, 1200], [2860, 1400], [2800, 1700], [2640, 1800], [2400, 1780]];
  const foot = [[1740, 1870], [2400, 1870], [2440, 1960], [2380, 2050], [2160, 2090], [1950, 2100], [1830, 2080], [1770, 1990]];
  fill(body, 34, "far");
  fill(core, 36, "far");
  fill(foot, 16, "far");
  fill([[2700, 2120], [3100, 2060], [3330, 2150], [3330, 2196], [2700, 2196]], 14, "far");
  fill(body, 42, "mid");
  fill(core, 12, "mid");
  fill(foot, 12, "mid");
  fill(body.filter(p => p[0] < 3060), 40, "near");
  fill(foot, 14, "near");
  trace([[2653, 909], [2646, 926], [2686, 952], [2686, 982], [2745, 1008], [2817, 1012], [2857, 999]], "C");
  trace([[2844, 1004], [2863, 943], [2850, 926], [2840, 909]], "O");
  trace([[2857, 1000], [2877, 1038], [2929, 1081], [2982, 1112], [2975, 1146], [2962, 1185], [3047, 1211], [3080, 1190], [3100, 1155]], "N");
  trace([[2686, 982], [2633, 1017], [2620, 1051], [2574, 1047], [2541, 1038], [2535, 1012], [2541, 952]], "O");
  trace([[2442, 913], [2423, 965], [2475, 978], [2495, 1008], [2535, 1008]], "N");
  trace([[2620, 1051], [2627, 1086], [2679, 1086], [2699, 1038], [2771, 1047]], "C");
  trace([[2877, 1038], [2862, 1110], [2900, 1160], [2960, 1180]], "O");
  trace([[3047, 1211], [3087, 1224], [3107, 1258]], "O");
  trace([[3047, 1211], [3021, 1275], [3028, 1310], [3067, 1327], [3061, 1361]], "O");
  trace([[1384, 1775], [1410, 1797], [1450, 1784], [1482, 1753], [1482, 1736], [1515, 1723]], "N");
  trace([[1410, 1797], [1404, 1820]], "O");
  trace([[1450, 1784], [1482, 1814], [1522, 1814], [1548, 1784], [1575, 1766], [1568, 1728]], "O");
  trace([[1482, 1814], [1484, 1855]], "O");
  trace([[1522, 1814], [1552, 1834], [1544, 1857]], "O");
  trace([[1575, 1766], [1594, 1805], [1614, 1827], [1621, 1853], [1667, 1878], [1660, 1930], [1614, 1922], [1588, 1887], [1621, 1853]], "C");
  trace([[1614, 1827], [1640, 1815], [1686, 1805], [1656, 1775], [1656, 1762]], "N");
  trace([[1667, 1878], [1745, 1900], [1752, 1990], [1706, 2050], [1660, 2076]], "N");
  trace([[1752, 1990], [1810, 2000], [1850, 2008], [1864, 2102], [1838, 2154], [1870, 2120], [1864, 2102]], "N");
  trace([[1752, 1990], [1770, 2060], [1720, 2110], [1706, 2140], [1694, 2158]], "O");
  trace([[1706, 2115], [1670, 2120], [1658, 2100]], "O");
  trace([[1864, 2102], [1930, 2090], [2010, 2100], [2060, 2060]], "O");
  trace([[2245, 2060], [2255, 2100], [2280, 2120], [2282, 2150]], "O");
  trace([[2460, 1960], [2462, 2076], [2500, 2078], [2530, 2100], [2550, 2190]], "N");
  trace([[2900, 1780], [2960, 1810], [3030, 1760], [3040, 1740]], "O");
  trace([[2960, 1965], [3010, 1960], [3020, 1850], [3040, 1800], [3080, 1790]], "C");
  trace([[3020, 1890], [3070, 1888], [3100, 1910], [3085, 1942], [3050, 1930], [3040, 1900]], "N");
  trace([[2950, 1490], [2990, 1440], [3006, 1385]], "O");
  trace([[2940, 1580], [2960, 1620], [2940, 1700], [2930, 1740]], "N");
  const svg = document.getElementById("molecule");
  for (const depth of ["far", "mid", "near"])
    for (const atom of ["C", "N", "O", "S"]) {
      const el = document.createElementNS("http://www.w3.org/2000/svg", "path");
      el.setAttribute("d", paths[depth][atom] || "");
      el.setAttribute("stroke", tones[depth][atom]);
      svg.appendChild(el);
    }
  const sulfur = document.createElementNS("http://www.w3.org/2000/svg", "path");
  sulfur.setAttribute("d", "M2630 1405L2610 1450L2640 1490L2656 1496M2836 1615L2824 1640L2856 1680M2500 1430L2520 1415M2760 2078L2800 2076L2834 2106V2150M2680 2028L2708 2050V2090M1740 2030L1756 2050M1725 1925V1950M2820 1285L2838 1308");
  sulfur.setAttribute("stroke", "#d6c800");
  svg.appendChild(sulfur);
})();
```
